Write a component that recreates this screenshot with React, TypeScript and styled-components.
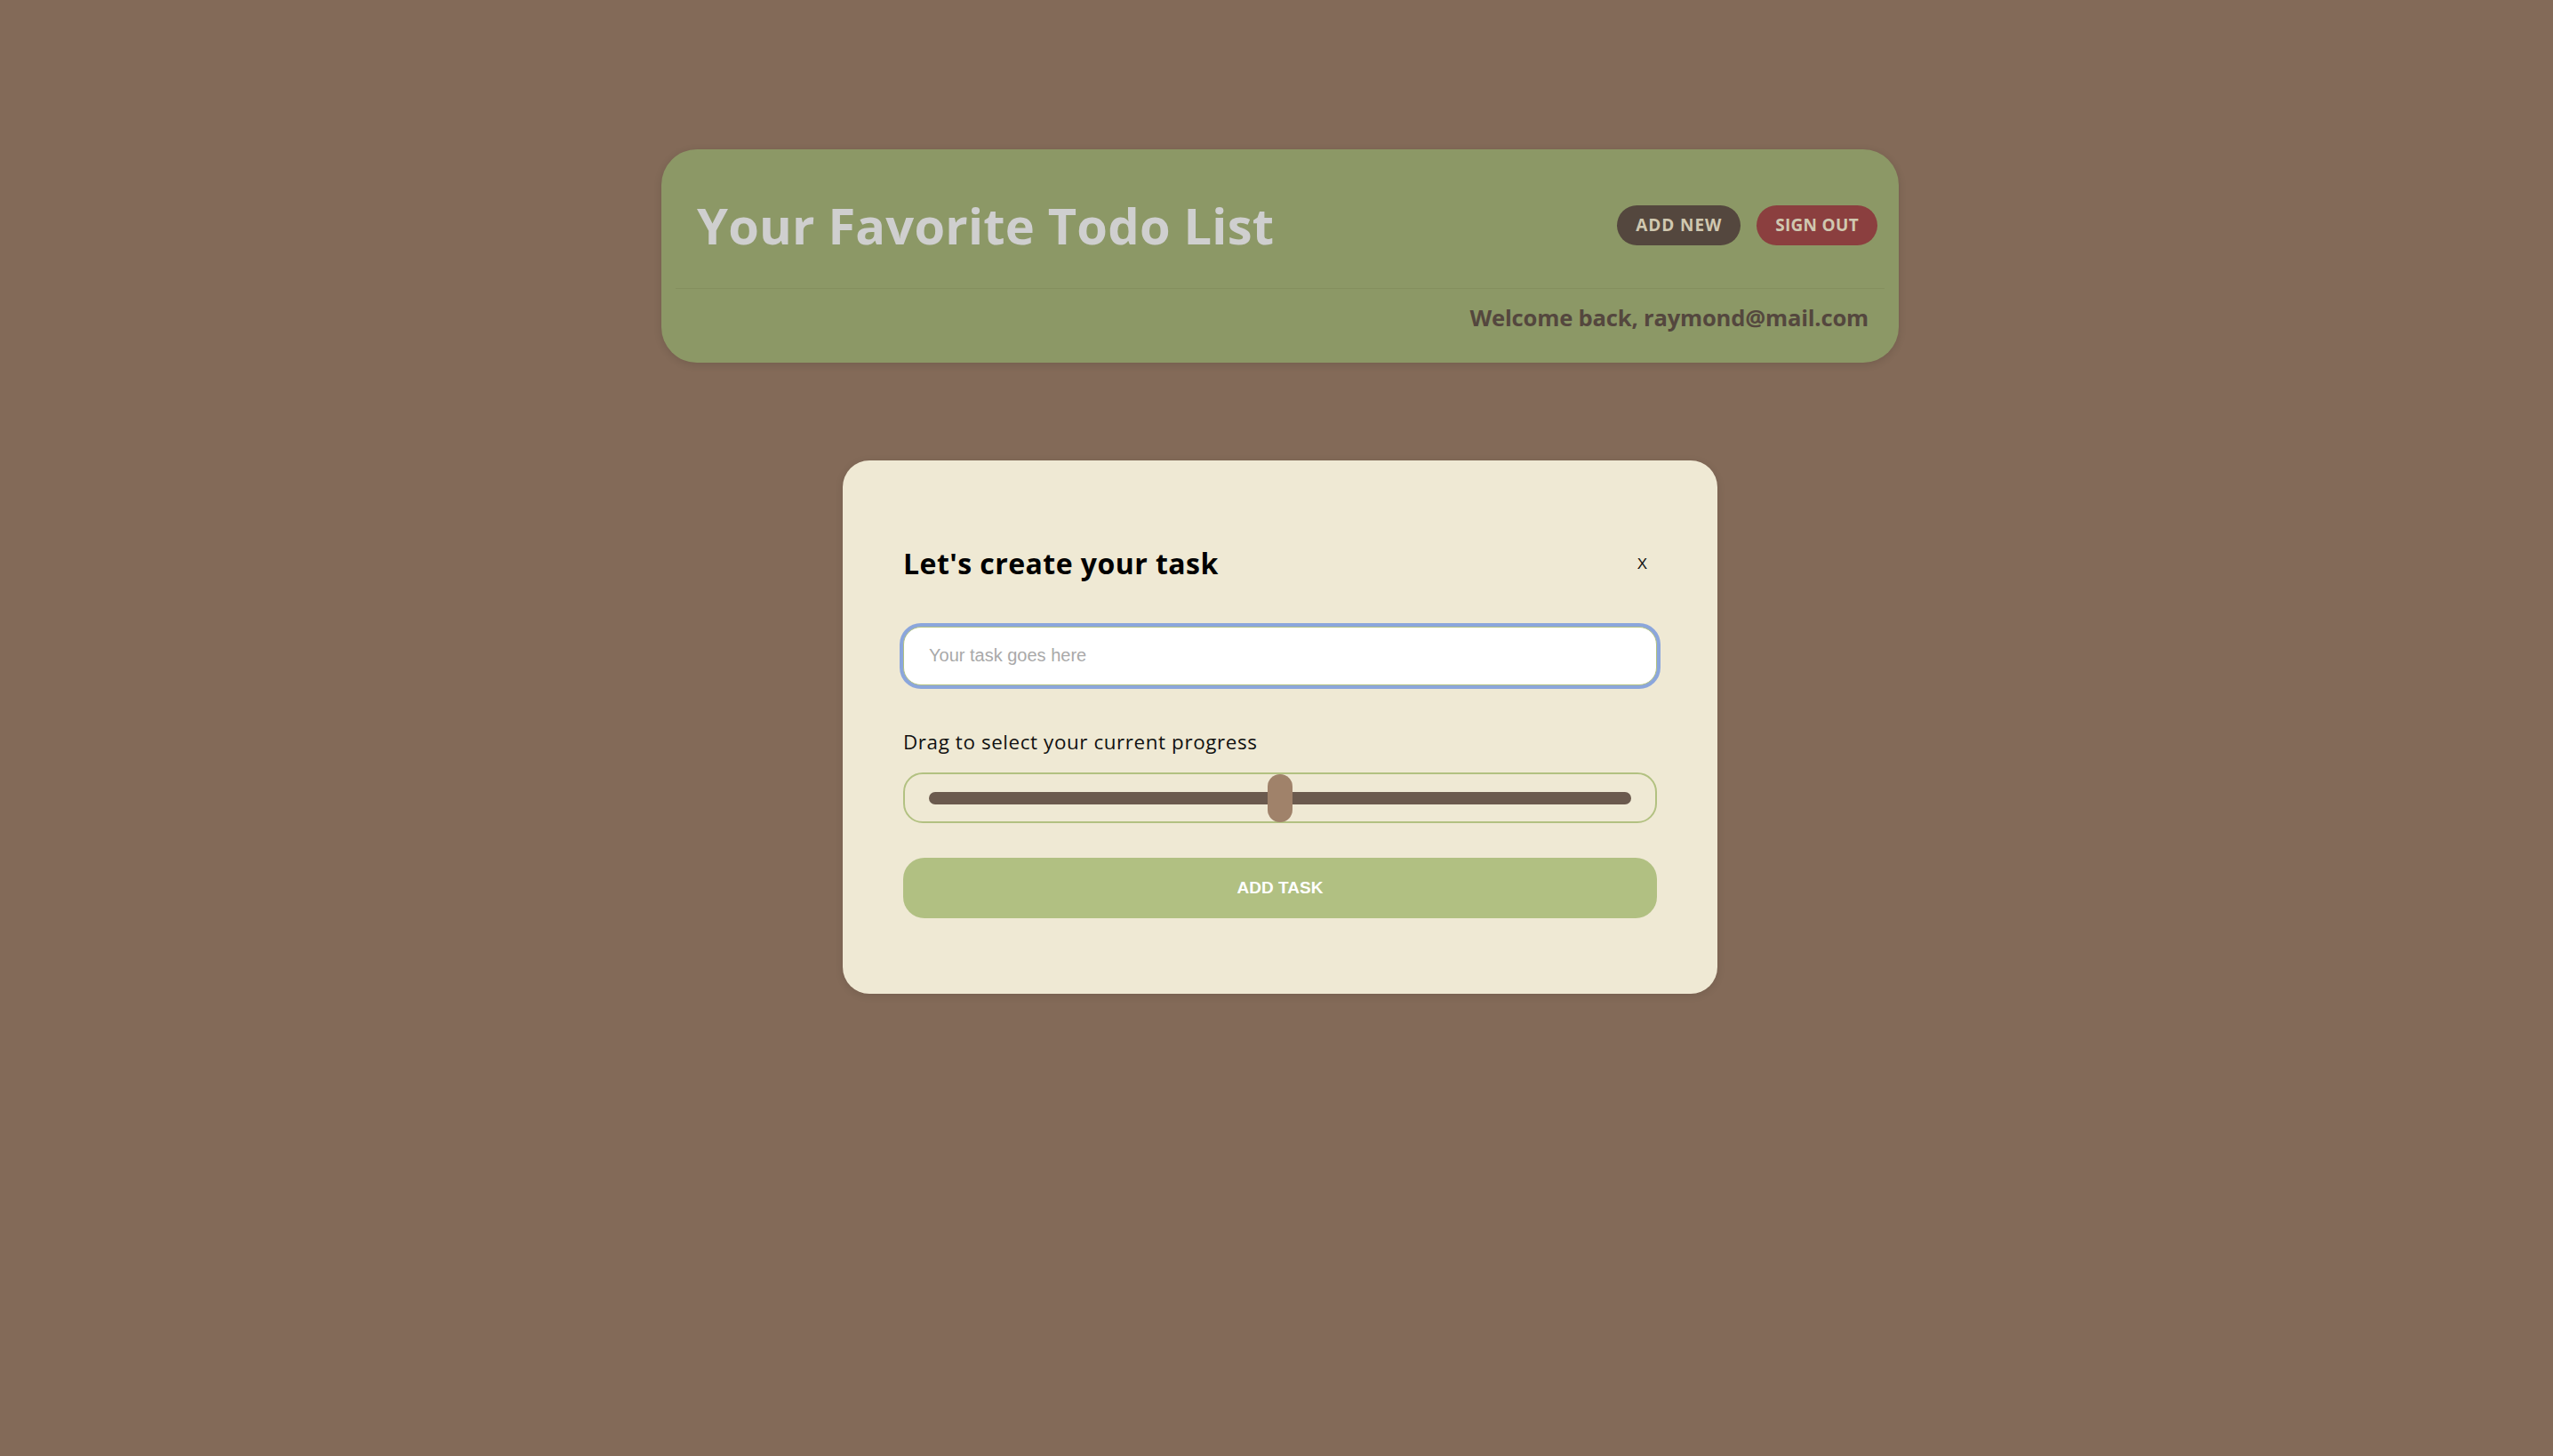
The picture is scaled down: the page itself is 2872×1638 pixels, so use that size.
import React, { useState } from "react";
import styled, { createGlobalStyle } from "styled-components";

const GlobalStyle = createGlobalStyle`
  html, body {
    margin: 0;
    padding: 0;
    background: #836a58;
  }
  body {
    font-family: "Open Sans", "Liberation Sans", sans-serif;
  }
  * { box-sizing: border-box; }
`;

const Page = styled.div`
  min-height: 100vh;
  padding: 168px 0 0 8px;
  display: flex;
  flex-direction: column;
  align-items: center;
`;

const HeaderCard = styled.header`
  width: 1392px;
  background: #8c9866;
  border-radius: 40px;
  padding: 0 16px;
  box-shadow: 0 2px 10px rgba(0, 0, 0, 0.12);
`;

const TopRow = styled.div`
  height: 156px;
  padding: 14px 8px 0 24px;
  display: flex;
  align-items: center;
  justify-content: space-between;
`;

const AppTitle = styled.h1`
  margin: 0;
  font-family: "Open Sans", sans-serif;
  font-weight: 700;
  font-size: 56px;
  line-height: 1;
  color: #cfcfcf;
  letter-spacing: 0.2px;
`;

const Actions = styled.div`
  display: flex;
  gap: 18px;
`;

const PillButton = styled.button<{ $tone: "dark" | "red" }>`
  height: 45px;
  padding: 0 21px;
  border: none;
  border-radius: 23px;
  background: ${(p) => (p.$tone === "dark" ? "#54473e" : "#8b3f3f")};
  color: #d0c8b0;
  font-family: "Open Sans", sans-serif;
  font-weight: 700;
  font-size: 19px;
  letter-spacing: ${(p) => (p.$tone === "dark" ? "0.9px" : "0.3px")};
  cursor: pointer;
`;

const Divider = styled.hr`
  margin: 0;
  border: none;
  border-top: 1px solid rgba(70, 80, 40, 0.12);
`;

const BottomRow = styled.div`
  padding: 20px 18px 37px 0;
  display: flex;
  justify-content: flex-end;
`;

const Welcome = styled.p`
  margin: 0;
  font-family: "Open Sans", sans-serif;
  font-weight: 700;
  font-size: 25.6px;
  line-height: 1;
  letter-spacing: -0.2px;
  color: #54473e;
`;

const Modal = styled.section`
  margin-top: 110px;
  width: 984px;
  background: #efe9d4;
  border-radius: 30px;
  padding: 100px 68px 85px;
  display: flex;
  flex-direction: column;
  box-shadow: 0 2px 10px rgba(0, 0, 0, 0.1);
`;

const ModalHeader = styled.div`
  display: flex;
  align-items: center;
  justify-content: space-between;
`;

const ModalTitle = styled.h2`
  margin: 0;
  font-family: "Open Sans", sans-serif;
  font-weight: 700;
  font-size: 32px;
  line-height: 1;
  letter-spacing: 0.45px;
  color: #000;
`;

const CloseButton = styled.button`
  border: none;
  background: transparent;
  padding: 2px 11px 0;
  font-family: "Liberation Sans", Arial, sans-serif;
  font-size: 17px;
  color: #111;
  cursor: pointer;
`;

const TaskInput = styled.input`
  margin-top: 55px;
  height: 66px;
  width: 100%;
  border: 1px solid #b2c181;
  border-radius: 20px;
  background: #fff;
  padding: 0 28px;
  font-family: "Liberation Sans", Arial, sans-serif;
  font-size: 20px;
  color: #222;
  outline: none;
  box-shadow: 0 0 0 4px #8ba6dc;
  &::placeholder {
    color: #a9a9a9;
  }
`;

const Label = styled.label`
  margin-top: 53px;
  font-family: "Open Sans", sans-serif;
  font-weight: 400;
  font-size: 22.4px;
  line-height: 1;
  letter-spacing: 0.6px;
  color: #111;
`;

const SliderBox = styled.div`
  margin-top: 23px;
  height: 57px;
  border: 2px solid #b2c181;
  border-radius: 22px;
  padding: 0 27px;
  display: flex;
  align-items: center;
`;

const Range = styled.input`
  -webkit-appearance: none;
  appearance: none;
  width: 100%;
  height: 53px;
  margin: 0;
  background: transparent;
  cursor: pointer;

  &::-webkit-slider-runnable-track {
    height: 14px;
    border-radius: 7px;
    background: #6b5a4e;
  }
  &::-webkit-slider-thumb {
    -webkit-appearance: none;
    appearance: none;
    width: 28px;
    height: 54px;
    margin-top: -20px;
    border-radius: 14px;
    background: #a0826a;
    border: none;
  }
  &::-moz-range-track {
    height: 14px;
    border-radius: 7px;
    background: #6b5a4e;
  }
  &::-moz-range-thumb {
    width: 28px;
    height: 54px;
    border-radius: 14px;
    background: #a0826a;
    border: none;
  }
  &:focus {
    outline: none;
  }
`;

const SubmitButton = styled.button`
  margin-top: 39px;
  height: 68px;
  width: 100%;
  border: none;
  border-radius: 24px;
  background: #b1c082;
  color: #fff;
  font-family: "Liberation Sans", Arial, sans-serif;
  font-weight: 700;
  font-size: 19px;
  cursor: pointer;
`;

export default function App() {
  const [progress, setProgress] = useState(50);
  const [task, setTask] = useState("");
  return (
    <>
      <GlobalStyle />
      <Page>
        <HeaderCard>
          <TopRow>
            <AppTitle>Your Favorite Todo List</AppTitle>
            <Actions>
              <PillButton $tone="dark">ADD NEW</PillButton>
              <PillButton $tone="red">SIGN OUT</PillButton>
            </Actions>
          </TopRow>
          <Divider />
          <BottomRow>
            <Welcome>Welcome back, raymond@mail.com</Welcome>
          </BottomRow>
        </HeaderCard>

        <Modal>
          <ModalHeader>
            <ModalTitle>Let's create your task</ModalTitle>
            <CloseButton>X</CloseButton>
          </ModalHeader>
          <TaskInput
            placeholder="Your task goes here"
            value={task}
            onChange={(e) => setTask(e.target.value)}
          />
          <Label htmlFor="progress">Drag to select your current progress</Label>
          <SliderBox>
            <Range
              id="progress"
              type="range"
              min={0}
              max={100}
              value={progress}
              onChange={(e) => setProgress(Number(e.target.value))}
            />
          </SliderBox>
          <SubmitButton>ADD TASK</SubmitButton>
        </Modal>
      </Page>
    </>
  );
}
